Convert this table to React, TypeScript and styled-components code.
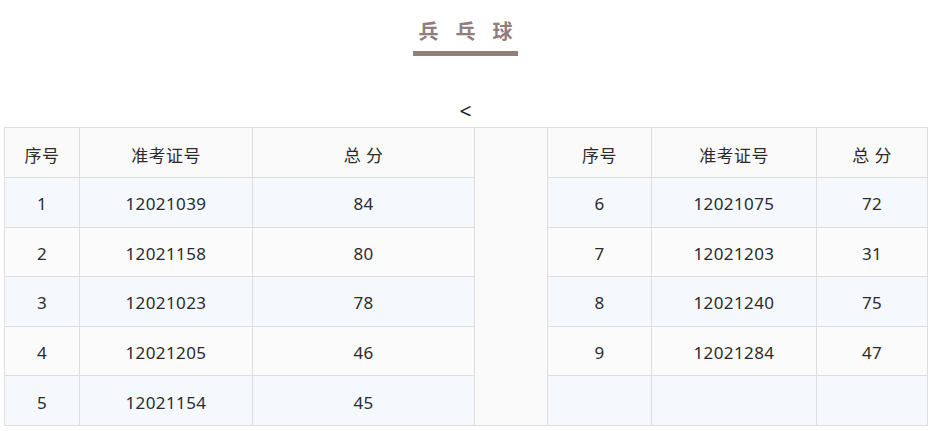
import React from 'react';
import styled, { createGlobalStyle } from 'styled-components';

const GlobalStyle = createGlobalStyle`
  html, body {
    margin: 0;
    padding: 0;
    background: #ffffff;
    font-family: "Noto Sans", "Noto Sans CJK SC", sans-serif;
    color: #333333;
  }
`;

const Page = styled.div`
  width: 933px;
  padding: 0 6px 0 4px;
  box-sizing: border-box;
`;

const Header = styled.div`
  display: flex;
  flex-direction: column;
  align-items: center;
  padding-top: 17px;
`;

const Title = styled.h2`
  margin: 0;
  font-family: "Noto Sans CJK SC", sans-serif;
  font-size: 20px;
  font-weight: 700;
  line-height: 28px;
  letter-spacing: 17px;
  margin-right: -17px;
  color: #917d7c;
`;

const Underline = styled.div`
  width: 105px;
  height: 5px;
  margin-top: 6px;
  background: #937e7e;
`;

const Arrow = styled.div`
  margin-top: 43px;
  height: 24px;
  font-family: "Noto Sans", sans-serif;
  font-size: 21px;
  line-height: 24px;
  color: #222222;
  text-align: center;
`;

const Table = styled.table`
  width: 923px;
  border-collapse: collapse;
  table-layout: fixed;
  margin-top: 4px;
`;

const Row = styled.tr<{ $tone: 'head' | 'blue' | 'grey' }>`
  height: ${(p) => (p.$tone === 'head' ? 50 : 49.6)}px;
  background: ${(p) =>
    p.$tone === 'blue' ? '#f5f9fe' : p.$tone === 'grey' ? '#fbfbfb' : '#fafafa'};
`;

const Cell = styled.td`
  border: 1px solid #dedede;
  padding: 3px 0 0;
  text-align: center;
  vertical-align: middle;
  font-size: 17px;
  letter-spacing: 0.4px;
  color: #2b2b2b;
  font-family: "Noto Sans", "Noto Sans CJK SC", sans-serif;
`;

const Gap = styled.td`
  border: 1px solid #dedede;
  background: #fafafa;
  padding: 0;
`;

const widths = [75, 173, 222, 73, 104, 165, 111];

const left = [
  ['1', '12021039', '84'],
  ['2', '12021158', '80'],
  ['3', '12021023', '78'],
  ['4', '12021205', '46'],
  ['5', '12021154', '45'],
];

const right = [
  ['6', '12021075', '72'],
  ['7', '12021203', '31'],
  ['8', '12021240', '75'],
  ['9', '12021284', '47'],
  ['', '', ''],
];

const App: React.FC = () => {
  return (
    <Page>
      <GlobalStyle />
      <Header>
        <Title>兵乓球</Title>
        <Underline />
      </Header>
      <Arrow>&lt;</Arrow>
      <Table>
        <colgroup>
          {widths.map((w, i) => (
            <col key={i} style={{ width: w }} />
          ))}
        </colgroup>
        <tbody>
          <Row $tone="head">
            <Cell>序号</Cell>
            <Cell>准考证号</Cell>
            <Cell>总 分</Cell>
            <Gap rowSpan={6} />
            <Cell>序号</Cell>
            <Cell>准考证号</Cell>
            <Cell>总 分</Cell>
          </Row>
          {left.map((row, i) => (
            <Row key={i} $tone={i % 2 === 0 ? 'blue' : 'grey'}>
              {row.map((v, j) => (
                <Cell key={'l' + j}>{v}</Cell>
              ))}
              {right[i].map((v, j) => (
                <Cell key={'r' + j}>{v}</Cell>
              ))}
            </Row>
          ))}
        </tbody>
      </Table>
    </Page>
  );
};

export default App;
